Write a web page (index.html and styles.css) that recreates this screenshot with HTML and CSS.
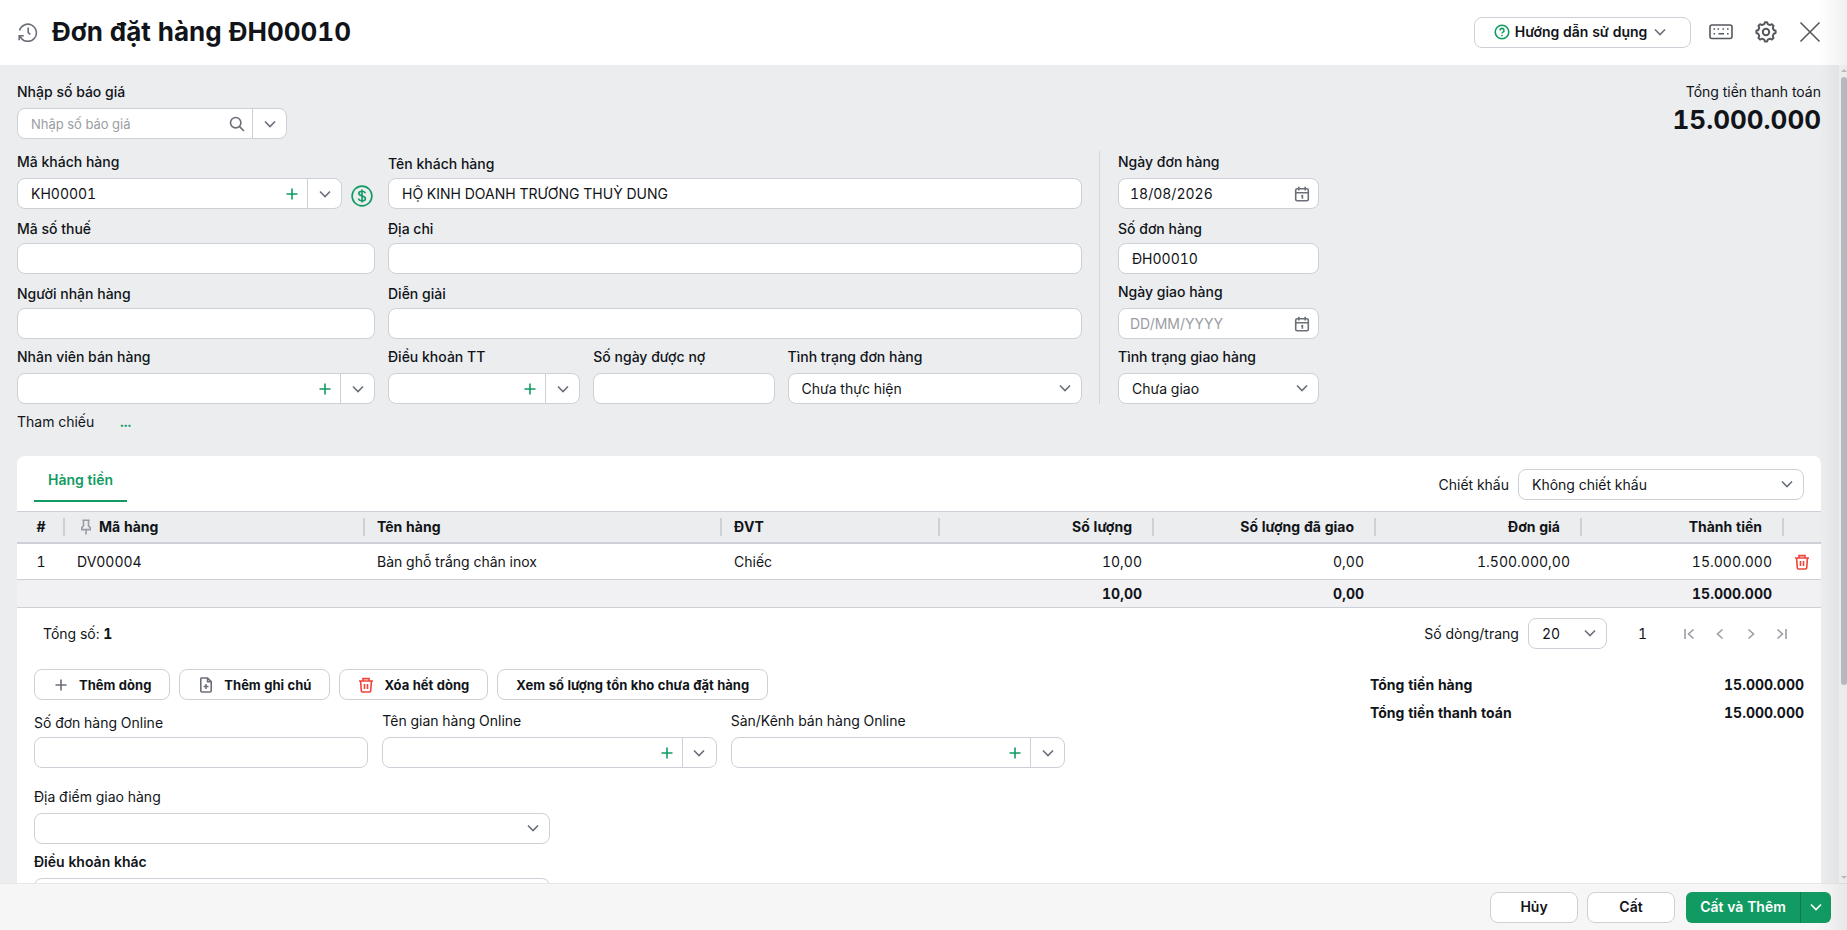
FILE: index.html
```html
<!DOCTYPE html>
<html lang="vi">
<head>
    <meta charset="UTF-8">
    <meta name="viewport" content="width=device-width, initial-scale=1.0">
    <title>Đơn đặt hàng ĐH00010</title>
    <link rel="stylesheet" href="styles.css">
</head>
<body>

<!-- Icons -->
<svg class="sprite" aria-hidden="true">
    <symbol id="i-down" viewBox="0 0 16 16"><path d="M3 5.5l5 5 5-5"/></symbol>
    <symbol id="i-plus" viewBox="0 0 16 16"><path d="M8 2.5v11M2.5 8h11"/></symbol>
    <symbol id="i-search" viewBox="0 0 16 16"><circle cx="6.7" cy="6.7" r="5.2"/><path d="M10.6 10.6l4.4 4.4"/></symbol>
    <symbol id="i-calendar" viewBox="0 0 16 16"><rect x="1.7" y="2.8" width="12.6" height="12" rx="1.5"/><path d="M1.7 6.8h12.6M4.8 .8v3.6M11.2 .8v3.6M7.2 10.2l1.2-.5v3"/></symbol>
    <symbol id="i-trash" viewBox="0 0 16 16"><path d="M1 4h14M5 3.8V1.6h6v2.2M2.6 4.2l.7 9.6a1.4 1.4 0 0 0 1.4 1.2h6.6a1.4 1.4 0 0 0 1.4-1.2l.7-9.6M6.5 7v5M9.5 7v5"/></symbol>
    <symbol id="i-note" viewBox="0 0 16 16"><path d="M3.5 1h6l3.7 3.7v9a1.3 1.3 0 0 1-1.3 1.3H4.1a1.3 1.3 0 0 1-1.3-1.3V1.7zM9.5 1v3.7h3.7M8 7v5M5.5 9.5h5"/></symbol>
    <symbol id="i-pin" viewBox="0 0 16 16"><path d="M4.3 1.2h7.4M5.5 1.2v5.6L3.8 8.6v2h8.4v-2l-1.7-1.8V1.2M8 10.6V15.5"/></symbol>
</svg>

<header class="header">
    <svg class="icon history" viewBox="0 0 20 20"><path d="M3.1 16.2A8.6 8.6 0 1 0 1.5 8.5M1.2 18.2v-4.4h4.6M1.4 14l2.4 2.6M10.2 5.5v5l2.2 1.8"/></svg>
    <h1>Đơn đặt hàng ĐH00010</h1>
    <button class="btn help">
        <svg class="icon green" viewBox="0 0 16 16"><circle cx="8" cy="8" r="6.8"/><path d="M6 6.4a2 2 0 1 1 3 1.7c-.7.4-1 .7-1 1.4M8 11v1.2"/></svg>
        Hướng dẫn sử dụng
        <svg class="icon"><use href="#i-down"/></svg>
    </button>
    <button class="icon-btn" aria-label="Phím tắt"><svg class="icon keyboard" viewBox="0 0 24 16"><rect x="1" y="1" width="22" height="13.5" rx="2"/><path d="M4.5 5h1.6M8.5 5h1.6M13.5 5h1.6M18 5h1.6M4.5 9.8h1.6M9.5 9.8h5.5M18 9.8h1.6"/></svg></button>
    <button class="icon-btn" aria-label="Thiết lập"><svg class="icon gear" viewBox="1 1 22 22"><circle cx="12" cy="12" r="3.2"/><path d="M10.2 4.1l.7-1.8h2.2l.7 1.8 2.3 1 1.8-.9 1.7 1.7-.9 1.8 1 2.3 1.9.7v2.4l-1.9.7-1 2.3.9 1.8-1.7 1.7-1.8-.9-2.3 1-.7 1.8h-2.2l-.7-1.8-2.3-1-1.8.9-1.7-1.7.9-1.8-1-2.3-1.9-.7v-2.4l1.9-.7 1-2.3-.9-1.8 1.7-1.7 1.8.9z"/></svg></button>
    <button class="icon-btn" aria-label="Đóng"><svg class="icon close" viewBox="0 0 22 22"><path d="M1.5 1.5l19 19M20.5 1.5l-19 19"/></svg></button>
</header>

<div class="viewport">
    <main class="content">
        <div class="top">
            <div class="field tall quote">
                <label for="quote">Nhập số báo giá</label>
                <div class="combo">
                    <input type="text" id="quote" placeholder="Nhập số báo giá">
                    <button aria-label="Tìm kiếm"><svg class="icon"><use href="#i-search"/></svg></button>
                    <button class="drop" aria-label="Chọn báo giá"><svg class="icon"><use href="#i-down"/></svg></button>
                </div>
            </div>
            <div class="grand-total">
                <span>Tổng tiền thanh toán</span>
                <strong>15.000.000</strong>
            </div>
        </div>

        <form class="form">
            <div class="form-main">
                <div class="field tall">
                    <label for="customerCode">Mã khách hàng</label>
                    <div class="with-debt">
                        <div class="combo">
                            <input type="text" id="customerCode" value="KH00001">
                            <button type="button" class="add" aria-label="Thêm khách hàng"><svg class="icon"><use href="#i-plus"/></svg></button>
                            <button type="button" class="drop" aria-label="Chọn khách hàng"><svg class="icon"><use href="#i-down"/></svg></button>
                        </div>
                        <button type="button" class="debt" aria-label="Công nợ"><svg class="icon" viewBox="0 0 22 22"><circle cx="11" cy="11" r="9.9"/><path d="M14.3 8.3c-.3-1.2-1.5-2-3.3-2s-3.2.8-3.2 2.3c0 3.2 6.6 1.5 6.6 4.8 0 1.5-1.4 2.4-3.4 2.4s-3.3-.9-3.5-2.3M11 4.6v12.8"/></svg></button>
                    </div>
                </div>
                <div class="field">
                    <label for="customerName">Tên khách hàng</label>
                    <input type="text" id="customerName" class="box" value="HỘ KINH DOANH TRƯƠNG THUỲ DUNG">
                </div>
                <div class="field">
                    <label for="taxCode">Mã số thuế</label>
                    <input type="text" id="taxCode" class="box">
                </div>
                <div class="field">
                    <label for="address">Địa chỉ</label>
                    <input type="text" id="address" class="box">
                </div>
                <div class="field">
                    <label for="receiver">Người nhận hàng</label>
                    <input type="text" id="receiver" class="box">
                </div>
                <div class="field">
                    <label for="description">Diễn giải</label>
                    <input type="text" id="description" class="box">
                </div>
                <div class="field tall">
                    <label for="seller">Nhân viên bán hàng</label>
                    <div class="combo">
                        <input type="text" id="seller">
                        <button type="button" class="add" aria-label="Thêm nhân viên"><svg class="icon"><use href="#i-plus"/></svg></button>
                        <button type="button" class="drop" aria-label="Chọn nhân viên"><svg class="icon"><use href="#i-down"/></svg></button>
                    </div>
                </div>
                <div class="terms">
                    <div class="field tall">
                        <label for="term">Điều khoản TT</label>
                        <div class="combo">
                            <input type="text" id="term">
                            <button type="button" class="add" aria-label="Thêm điều khoản"><svg class="icon"><use href="#i-plus"/></svg></button>
                            <button type="button" class="drop" aria-label="Chọn điều khoản"><svg class="icon"><use href="#i-down"/></svg></button>
                        </div>
                    </div>
                    <div class="field tall">
                        <label for="debtDays">Số ngày được nợ</label>
                        <input type="text" id="debtDays" class="box">
                    </div>
                    <div class="field tall">
                        <label for="orderStatus">Tình trạng đơn hàng</label>
                        <div class="select">
                            <select id="orderStatus" class="box"><option>Chưa thực hiện</option></select>
                            <svg class="icon"><use href="#i-down"/></svg>
                        </div>
                    </div>
                </div>
            </div>

            <div class="form-side">
                <div class="field tall">
                    <label for="orderDate">Ngày đơn hàng</label>
                    <div class="combo date">
                        <input type="text" id="orderDate" value="18/08/2026">
                        <button type="button" aria-label="Chọn ngày đơn hàng"><svg class="icon"><use href="#i-calendar"/></svg></button>
                    </div>
                </div>
                <div class="field">
                    <label for="orderNo">Số đơn hàng</label>
                    <input type="text" id="orderNo" class="box" value="ĐH00010">
                </div>
                <div class="field tall">
                    <label for="shipDate">Ngày giao hàng</label>
                    <div class="combo date">
                        <input type="text" id="shipDate" placeholder="DD/MM/YYYY">
                        <button type="button" aria-label="Chọn ngày giao hàng"><svg class="icon"><use href="#i-calendar"/></svg></button>
                    </div>
                </div>
                <div class="field tall">
                    <label for="shipStatus">Tình trạng giao hàng</label>
                    <div class="select">
                        <select id="shipStatus" class="box"><option>Chưa giao</option></select>
                        <svg class="icon"><use href="#i-down"/></svg>
                    </div>
                </div>
            </div>
        </form>

        <div class="reference">Tham chiếu <a href="#">...</a></div>

        <section class="card">
            <div class="tabs">
                <a href="#" class="tab">Hàng tiền</a>
                <div class="discount">
                    <label for="discount">Chiết khấu</label>
                    <div class="select">
                        <select id="discount" class="box"><option>Không chiết khấu</option></select>
                        <svg class="icon"><use href="#i-down"/></svg>
                    </div>
                </div>
            </div>

            <table class="items">
                <colgroup>
                    <col class="c-no"><col class="c-code"><col class="c-name"><col class="c-unit"><col class="c-qty"><col class="c-sent"><col class="c-price"><col class="c-amount"><col class="c-act">
                </colgroup>
                <thead>
                    <tr>
                        <th class="center">#</th>
                        <th><svg class="icon pin"><use href="#i-pin"/></svg>Mã hàng</th>
                        <th>Tên hàng</th>
                        <th>ĐVT</th>
                        <th class="num">Số lượng</th>
                        <th class="num">Số lượng đã giao</th>
                        <th class="num">Đơn giá</th>
                        <th class="num">Thành tiền</th>
                        <th></th>
                    </tr>
                </thead>
                <tbody>
                    <tr>
                        <td class="center">1</td>
                        <td>DV00004</td>
                        <td>Bàn ghỗ trắng chân inox</td>
                        <td>Chiếc</td>
                        <td class="num">10,00</td>
                        <td class="num">0,00</td>
                        <td class="num">1.500.000,00</td>
                        <td class="num">15.000.000</td>
                        <td class="action"><button class="icon-btn" aria-label="Xóa dòng"><svg class="icon red"><use href="#i-trash"/></svg></button></td>
                    </tr>
                </tbody>
                <tfoot>
                    <tr>
                        <td colspan="4"></td>
                        <td class="num">10,00</td>
                        <td class="num">0,00</td>
                        <td></td>
                        <td class="num">15.000.000</td>
                        <td></td>
                    </tr>
                </tfoot>
            </table>

            <div class="pager">
                <span class="count">Tổng số: <b>1</b></span>
                <label for="pageSize">Số dòng/trang</label>
                <div class="select">
                    <select id="pageSize" class="box"><option>20</option></select>
                    <svg class="icon"><use href="#i-down"/></svg>
                </div>
                <span class="page">1</span>
                <nav class="pages">
                    <button aria-label="Trang đầu"><svg class="icon" viewBox="0 0 16 16"><path d="M4 3v10M12.5 3.5L7.5 8l5 4.5"/></svg></button>
                    <button aria-label="Trang trước"><svg class="icon" viewBox="0 0 16 16"><path d="M10.5 3.5L5.5 8l5 4.5"/></svg></button>
                    <button aria-label="Trang sau"><svg class="icon" viewBox="0 0 16 16"><path d="M5.5 3.5l5 4.5-5 4.5"/></svg></button>
                    <button aria-label="Trang cuối"><svg class="icon" viewBox="0 0 16 16"><path d="M12 3v10M3.5 3.5l5 4.5-5 4.5"/></svg></button>
                </nav>
            </div>

            <div class="bottom">
                <div class="extra">
                    <div class="row-actions">
                        <button class="btn"><svg class="icon"><use href="#i-plus"/></svg>Thêm dòng</button>
                        <button class="btn"><svg class="icon"><use href="#i-note"/></svg>Thêm ghi chú</button>
                        <button class="btn"><svg class="icon red"><use href="#i-trash"/></svg>Xóa hết dòng</button>
                        <button class="btn">Xem số lượng tồn kho chưa đặt hàng</button>
                    </div>
                    <div class="online">
                        <div class="field">
                            <label for="onlineNo">Số đơn hàng Online</label>
                            <input type="text" id="onlineNo" class="box">
                        </div>
                        <div class="field tall">
                            <label for="shop">Tên gian hàng Online</label>
                            <div class="combo">
                                <input type="text" id="shop">
                                <button class="add" aria-label="Thêm gian hàng"><svg class="icon"><use href="#i-plus"/></svg></button>
                                <button class="drop" aria-label="Chọn gian hàng"><svg class="icon"><use href="#i-down"/></svg></button>
                            </div>
                        </div>
                        <div class="field tall">
                            <label for="channel">Sàn/Kênh bán hàng Online</label>
                            <div class="combo">
                                <input type="text" id="channel">
                                <button class="add" aria-label="Thêm kênh bán hàng"><svg class="icon"><use href="#i-plus"/></svg></button>
                                <button class="drop" aria-label="Chọn kênh bán hàng"><svg class="icon"><use href="#i-down"/></svg></button>
                            </div>
                        </div>
                    </div>
                    <div class="field tall place">
                        <label for="place">Địa điểm giao hàng</label>
                        <div class="select">
                            <select id="place" class="box"><option></option></select>
                            <svg class="icon"><use href="#i-down"/></svg>
                        </div>
                    </div>
                    <div class="field tall other">
                        <label for="other">Điều khoản khác</label>
                        <textarea id="other" class="box"></textarea>
                    </div>
                </div>
                <dl class="totals">
                    <div><dt>Tổng tiền hàng</dt><dd>15.000.000</dd></div>
                    <div><dt>Tổng tiền thanh toán</dt><dd>15.000.000</dd></div>
                </dl>
            </div>
        </section>
    </main>
    <div class="scrollbar"><span class="arrow up"></span><span class="thumb"></span><span class="arrow down"></span></div>
</div>

<footer class="footer">
    <button class="btn">Hủy</button>
    <button class="btn">Cất</button>
    <div class="save">
        <button>Cất và Thêm</button>
        <button class="more" aria-label="Tùy chọn cất"><svg class="icon"><use href="#i-down"/></svg></button>
    </div>
</footer>

<div class="edge-shadow"></div>

</body>
</html>
```

FILE: styles.css
```css
* {
    box-sizing: border-box;
}
body {
    margin: 0;
    height: 100vh;
    display: flex;
    flex-direction: column;
    overflow: hidden;
    font-family: Inter, "Liberation Sans", sans-serif;
    font-size: 14px;
    line-height: 20px;
    font-variant-numeric: tabular-nums;
    color: #111418;
    background-color: #fff;
}
input, select, textarea, button {
    font: inherit;
    font-variant-numeric: inherit;
    color: inherit;
    margin: 0;
}
button {
    padding: 0;
    border: 0;
    background: none;
    cursor: pointer;
}
a {
    color: #119b63;
    text-decoration: none;
}
.sprite {
    display: none;
}
.icon {
    width: 16px;
    height: 16px;
    flex: none;
    display: block;
    fill: none;
    stroke: #6b6f78;
    stroke-width: 1.6;
}
.icon.green {
    stroke: #119b63;
}
.icon.red {
    stroke: #f0443a;
}

/* Header */
.header {
    display: flex;
    align-items: center;
    flex: none;
    height: 65px;
    padding: 0 26px 1px 18px;
}
.header h1 {
    flex: 1;
    margin: 0 0 0 14px;
    font-size: 26px;
    line-height: 36px;
    font-weight: 700;
}
.header .history {
    width: 20px;
    height: 20px;
}
.btn {
    display: flex;
    align-items: center;
    justify-content: center;
    height: 31px;
    border: 1px solid #cdd0d6;
    border-radius: 8px;
    background-color: #fff;
    font-weight: 600;
}
.help {
    width: 217px;
    gap: 5px;
    margin-right: 18px;
    padding-right: 3px;
}
.icon-btn {
    display: flex;
}
.header .icon-btn + .icon-btn {
    margin-left: 22px;
}
.header .icon-btn .icon {
    stroke: #55585d;
}
.header .keyboard {
    width: 24px;
}
.header .gear {
    width: 22px;
    height: 22px;
    stroke-width: 2;
    stroke-linejoin: round;
}
.header .close {
    width: 22px;
    height: 22px;
}

/* Scrolling area */
.viewport {
    display: flex;
    flex: 1;
    min-height: 0;
    background-color: #ebedef;
}
.content {
    flex: 1;
    min-width: 0;
    overflow-y: auto;
    scrollbar-width: none;
    padding: 17px 18px 0 17px;
}
.scrollbar {
    display: flex;
    flex-direction: column;
    align-items: center;
    width: 8px;
    padding: 4px 0 4px 2px;
    background-color: #f8f8f8;
}
.scrollbar .thumb {
    width: 6px;
    height: 75%;
    margin: 5px 0 auto;
    border-radius: 3px;
    background-color: #bfc3c9;
}
.arrow {
    border: 3px solid transparent;
}
.arrow.up {
    border-top: 0;
    border-bottom-color: #bfc3c9;
}
.arrow.down {
    border-bottom: 0;
    border-top-color: #bfc3c9;
}

/* Fields */
.field {
    display: flex;
    flex-direction: column;
    gap: 4px;
    min-width: 0;
    font-weight: 500;
}
.field.tall {
    gap: 6px;
}
.box, .combo {
    width: 100%;
    height: 31px;
    border: 1px solid #cdd0d6;
    border-radius: 8px;
    background-color: #fff;
    font-weight: 400;
}
.box {
    padding: 0 13px;
}
.combo {
    display: flex;
    overflow: hidden;
}
.combo input {
    flex: 1;
    min-width: 0;
    padding: 0 0 0 13px;
    border: 0;
    outline: 0;
    background: none;
}
input::placeholder {
    color: #9a9da3;
}
.quote input::placeholder {
    font-size: 13px;
}
.combo button {
    display: flex;
    align-items: center;
    justify-content: center;
    width: 30px;
}
.combo .drop {
    width: 34px;
    border-left: 1px solid #cdd0d6;
}
.add .icon {
    stroke: #119b63;
}
.date input {
    padding-left: 11px;
}
.date button {
    width: 32px;
}
.select {
    position: relative;
}
.select select {
    display: block;
    appearance: none;
}
.select .icon {
    position: absolute;
    right: 9px;
    top: 7px;
    pointer-events: none;
}

.top {
    display: flex;
    justify-content: space-between;
    margin-bottom: 12px;
}
.quote {
    width: 270px;
}
.grand-total {
    display: flex;
    flex-direction: column;
    text-align: right;
}
.grand-total strong {
    font-size: 26px;
    line-height: 36px;
}
.form {
    display: grid;
    grid-template-columns: 1065fr 739fr;
}
.form-main {
    display: grid;
    grid-template-columns: 358fr 694fr;
    grid-auto-rows: 58px;
    gap: 7px 13px;
    align-items: end;
}
.terms {
    display: grid;
    grid-template-columns: 192fr 181fr 294fr;
    gap: 13px;
}
.with-debt {
    display: flex;
    align-items: center;
    gap: 9px;
}
.debt {
    margin: 4px 2px 0 0;
}
.debt .icon {
    width: 22px;
    height: 22px;
    stroke: #119b63;
}
.form-side {
    display: grid;
    grid-template-columns: 201px;
    grid-auto-rows: 58px;
    row-gap: 7px;
    align-items: end;
    margin-left: 17px;
    padding-left: 18px;
    border-left: 1px solid #d3d6da;
}
.reference {
    padding: 8px 0 24px;
}
.reference a {
    margin-left: 22px;
    font-weight: 700;
}

/* Card */
.card {
    background-color: #fff;
    border-radius: 8px 8px 0 0;
}
.tabs {
    display: flex;
    justify-content: space-between;
    height: 55px;
    padding: 13px 17px 0;
}
.tab {
    height: 33px;
    padding: 0 14px;
    border-bottom: 2px solid #119b63;
    line-height: 22px;
    font-weight: 600;
}
.discount {
    display: flex;
    align-items: center;
    gap: 9px;
    height: 31px;
}
.discount .select {
    width: 286px;
}
.items {
    width: 100%;
    table-layout: fixed;
    border-spacing: 0;
}
/* fixed layout shares out the spare width in these proportions */
.c-no { width: 48px; }
.c-code { width: 300px; }
.c-name { width: 357px; }
.c-unit { width: 218px; }
.c-qty { width: 214px; }
.c-sent { width: 222px; }
.c-price { width: 206px; }
.c-amount { width: 202px; }
.c-act { width: 37px; }
th, td {
    padding: 0 12px;
    text-align: left;
}
th {
    height: 33px;
    border-top: 1px solid #cdd0d6;
    border-bottom: 2px solid #cdd0d6;
    background: linear-gradient(#cdd0d6, #cdd0d6) right center / 2px 18px no-repeat #ebedef;
    font-weight: 700;
}
th:last-child {
    background: #ebedef;
}
td {
    height: 36px;
    border-bottom: 1px solid #cdd0d6;
}
.num {
    text-align: right;
}
th.num {
    padding-right: 22px;
}
th.center, td.center {
    padding: 0;
    text-align: center;
}
td.action {
    padding: 0 10px;
}
.pin {
    display: inline-block;
    margin: 0 5px 0 1px;
    vertical-align: -3px;
    stroke: #9a9da5;
}
tfoot td {
    height: 28px;
    background-color: #f1f1f4;
    font-weight: 700;
}
.pager {
    display: flex;
    align-items: center;
    height: 51px;
    padding: 0 31px 0 26px;
}
.count {
    flex: 1;
}
.pager .select {
    width: 79px;
    margin: 0 31px 0 9px;
}
.pages {
    display: flex;
    gap: 15px;
    margin-left: 34px;
}
.pages .icon {
    stroke: #9a9da3;
}
.bottom {
    display: flex;
    justify-content: space-between;
    padding: 10px 17px 17px;
}
.extra {
    flex: 0 1 1031px;
}
.extra .field {
    font-weight: 400;
}
.row-actions {
    display: flex;
    gap: 9px;
    margin-bottom: 11px;
}
.row-actions .btn {
    gap: 10px;
    padding: 0 18px;
    font-size: 13px;
    font-weight: 700;
}
.online {
    display: grid;
    grid-template-columns: repeat(3, 1fr);
    gap: 14px;
    align-items: end;
    margin-bottom: 19px;
}
.place, .other {
    width: 50%;
    margin-bottom: 8px;
}
.extra .other {
    font-weight: 600;
}
.other textarea {
    height: 60px;
    resize: none;
}
.totals {
    flex: 0 0 434px;
    margin: 6px 0 0;
    font-weight: 700;
}
.totals div {
    display: flex;
    justify-content: space-between;
    margin-bottom: 8px;
}
.totals dd {
    margin: 0;
}

/* Footer */
.footer {
    display: flex;
    justify-content: flex-end;
    align-items: center;
    gap: 9px;
    flex: none;
    height: 47px;
    padding: 0 16px 0 0;
    border-top: 1px solid #e6e7e9;
    background-color: #f6f6f6;
}
.footer .btn {
    width: 88px;
}
.save {
    display: flex;
    width: 145px;
    height: 31px;
    margin-left: 2px;
    border-radius: 6px;
    background-color: #119b63;
    color: #fff;
    font-weight: 600;
}
.save button {
    flex: 1;
}
.save .more {
    display: flex;
    flex: 0 0 31px;
    align-items: center;
    justify-content: center;
    border-left: 1px solid #0d7d50;
}
.save .icon {
    stroke: #fff;
}
.edge-shadow {
    position: absolute;
    top: 0;
    right: 0;
    bottom: 0;
    width: 28px;
    background: linear-gradient(to right, rgba(0, 0, 0, 0), rgba(0, 0, 0, 0.06));
    pointer-events: none;
}
```
